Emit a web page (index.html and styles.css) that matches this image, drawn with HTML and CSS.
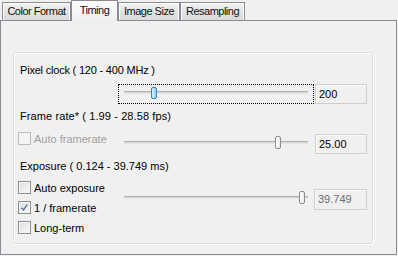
FILE: index.html
```html
<!DOCTYPE html>
<html>
<head>
<meta charset="utf-8">
<link rel="stylesheet" href="styles.css">
</head>
<body>
<div class="tabs">
  <div class="tab first">Color Format</div>
  <div class="tab selected">Timing</div>
  <div class="tab third">Image Size</div>
  <div class="tab fourth">Resampling</div>
</div>
<div class="panel">
  <div class="group">
    <div class="label l1">Pixel clock ( 120 - 400 MHz )</div>
    <div class="row r1">
      <div class="spacer"></div>
      <div class="slider focus">
        <div class="track"></div>
        <div class="thumb hot" style="left: 32px"></div>
      </div>
      <div class="textbox">200</div>
    </div>
    <div class="label l2">Frame rate* ( 1.99 - 28.58 fps)</div>
    <div class="row r2">
      <div class="check disabled cell"><span class="box"></span><span class="ctext">Auto framerate</span></div>
      <div class="slider lower">
        <div class="track"></div>
        <div class="thumb" style="left: 157px"></div>
      </div>
      <div class="textbox lower">25.00</div>
    </div>
    <div class="label l3">Exposure ( 0.124 - 39.749 ms)</div>
    <div class="row r3">
      <div class="checks cell">
        <div class="check"><span class="box"></span><span class="ctext">Auto exposure</span></div>
        <div class="check"><span class="box"><svg width="11" height="11" viewBox="0 0 11 11"><path d="M2.5 5.8 L4.5 8 L8.3 2.6" fill="none" stroke="#5a70aa" stroke-width="1.4"/></svg></span><span class="ctext">1 / framerate</span></div>
        <div class="check"><span class="box"></span><span class="ctext">Long-term</span></div>
      </div>
      <div class="slider expo">
        <div class="track"></div>
        <div class="thumb" style="left: 181px"></div>
      </div>
      <div class="textbox expo dis">39.749</div>
    </div>
  </div>
</div>
</body>
</html>
```
FILE: styles.css
```css
html, body {
  margin: 0;
  padding: 0;
  background: #f0f0f0;
}
body {
  width: 398px;
  height: 256px;
  overflow: hidden;
  font-family: "Liberation Sans", Arial, sans-serif;
  font-size: 11px;
  color: #000;
}
.tabs {
  display: flex;
  align-items: flex-end;
  height: 20px;
  padding-left: 2px;
  position: relative;
  z-index: 2;
}
.tab {
  box-sizing: border-box;
  height: 18px;
  border: 1px solid #898c95;
  border-bottom: none;
  background: linear-gradient(#f3f3f3, #e3e3e3 50%, #dadada);
  box-shadow: inset 1px 1px 0 #fcfcfc, inset -1px 0 0 #fcfcfc;
  line-height: 17px;
  letter-spacing: -0.5px;
  text-align: center;
  white-space: nowrap;
  color: #111;
}
.tab.first { width: 69px; }
.tab.selected {
  height: 21px;
  width: 47px;
  margin-bottom: -1px;
  background: linear-gradient(#fdfdfd, #f4f4f4 60%, #f0f0f0);
  box-shadow: none;
  line-height: 19px;
  color: #1a0a2a;
}
.tab.third { width: 62px; }
.tab.fourth { width: 65px; }

.panel {
  box-sizing: border-box;
  width: 397px;
  height: 235px;
  border: 1px solid #898c95;
  padding: 31px 0 0 12px;
  position: relative;
  z-index: 1;
}
.group {
  box-sizing: border-box;
  width: 360px;
  height: 192px;
  border: 1px solid #d5dfe5;
  border-radius: 3px;
  box-shadow: inset 1px 1px 0 #fff, 1px 1px 0 #fff;
  padding: 0 0 0 4px;
  display: flex;
  flex-direction: column;
}
.label {
  line-height: 13px;
  height: 13px;
  margin-left: 2px;
  white-space: nowrap;
}
.l1 { margin-top: 11px; letter-spacing: -0.2px; }
.l2 { margin-top: 6px; letter-spacing: 0.1px; }
.l3 { margin-top: 6px; }
.row {
  display: flex;
  align-items: flex-start;
}
.r1 { margin-top: 7px; }
.r2 { margin-top: 9px; }
.r3 { margin-top: 8px; }
.spacer, .cell { width: 100px; flex: none; }

.slider {
  box-sizing: border-box;
  width: 196px;
  height: 20px;
  position: relative;
  flex: none;
}
.slider.focus { border: 1px dotted #000; }
.slider.lower { margin-top: 2px; }
.slider.expo { margin-top: 8px; }
.track {
  margin: 7px 6px 0 6px;
  height: 1px;
  border-top: 1px solid #b0b0b0;
  border-bottom: 1px solid #e6e6e6;
  background: #d6d6d6;
}
.slider.focus .track { margin: 6px 5px 0 5px; }
.thumb {
  position: absolute;
  top: 2px;
  width: 4px;
  height: 11px;
  border: 1px solid #8c8c8c;
  border-radius: 2px;
  background: linear-gradient(to right, #fff, #e8e8e8);
}
.thumb.hot {
  top: 2px;
  height: 10px;
  border-color: #3c7fb1;
  background: linear-gradient(to right, #d6effb, #8fd0f2);
}
.textbox {
  box-sizing: border-box;
  width: 52px;
  height: 20px;
  margin-left: 1px;
  border: 1px solid #cfcfcf;
  box-shadow: inset 1px 1px 0 #fafafa;
  background: #f0f0f0;
  padding-left: 3px;
  line-height: 18px;
  flex: none;
}
.textbox.lower { margin-top: 2px; }
.textbox.expo { margin-top: 8px; margin-left: 0; width: 53px; height: 21px; line-height: 19px; }
.textbox.dis { color: #6d6d6d; }

.checks {
  display: flex;
  flex-direction: column;
  gap: 7px;
}
.check {
  display: flex;
  align-items: center;
  height: 13px;
  white-space: nowrap;
}
.box {
  box-sizing: border-box;
  width: 13px;
  height: 13px;
  border: 1px solid #8e8f8f;
  background: linear-gradient(135deg, #dcdcdc, #fbfbfb);
  box-shadow: inset 0 0 0 1px #f4f4f4;
  flex: none;
  display: flex;
  align-items: center;
  justify-content: center;
}
.check.disabled .box {
  border-color: #bcbcbc;
  background: #f4f4f4;
}
.check.disabled .ctext { color: #a0a0a0; }
.ctext { margin-left: 3px; }
```
